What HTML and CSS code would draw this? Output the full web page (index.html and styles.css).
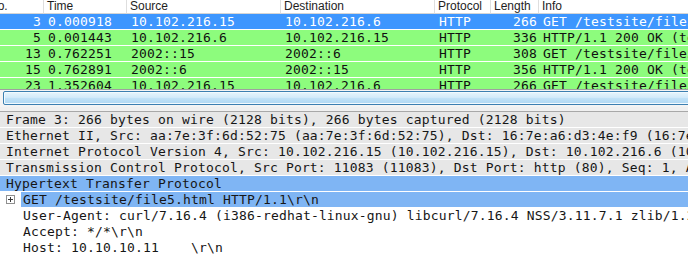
FILE: index.html
```html
<!DOCTYPE html>
<html>
<head>
<meta charset="utf-8">
<link rel="stylesheet" href="styles.css">
</head>
<body>
<div class="app">
  <div class="plist">
    <div class="grid">
      <div class="hd hd-no">No.</div>
      <div class="hd">Time</div>
      <div class="hd">Source</div>
      <div class="hd">Destination</div>
      <div class="hd">Protocol</div>
      <div class="hd">Length</div>
      <div class="hd">Info</div>

      <div class="row sel">
        <span class="c num">3</span><span class="c">0.000918</span><span class="c">10.102.216.15</span><span class="c">10.102.216.6</span><span class="c">HTTP</span><span class="c len">266</span><span class="c">GET /testsite/file5.html HTTP/1.1</span>
      </div>
      <div class="row">
        <span class="c num">5</span><span class="c">0.001443</span><span class="c">10.102.216.6</span><span class="c">10.102.216.15</span><span class="c">HTTP</span><span class="c len">336</span><span class="c">HTTP/1.1 200 OK  (text/html)</span>
      </div>
      <div class="row">
        <span class="c num">13</span><span class="c">0.762251</span><span class="c">2002::15</span><span class="c">2002::6</span><span class="c">HTTP</span><span class="c len">308</span><span class="c">GET /testsite/file5.html HTTP/1.1</span>
      </div>
      <div class="row">
        <span class="c num">15</span><span class="c">0.762891</span><span class="c">2002::6</span><span class="c">2002::15</span><span class="c">HTTP</span><span class="c len">356</span><span class="c">HTTP/1.1 200 OK  (text/html)</span>
      </div>
      <div class="row">
        <span class="c num">23</span><span class="c">1.352604</span><span class="c">10.102.216.15</span><span class="c">10.102.216.6</span><span class="c">HTTP</span><span class="c len">266</span><span class="c">GET /testsite/file5.html HTTP/1.1</span>
      </div>
    </div>
  </div>
  <div class="hscroll"><div class="thumb"></div></div>
  <div class="splitter"></div>
  <div class="details">
    <div class="dl g">Frame 3: 266 bytes on wire (2128 bits), 266 bytes captured (2128 bits)</div>
    <div class="dl g">Ethernet II, Src: aa:7e:3f:6d:52:75 (aa:7e:3f:6d:52:75), Dst: 16:7e:a6:d3:4e:f9 (16:7e:a6:d3:4e:f9)</div>
    <div class="dl g">Internet Protocol Version 4, Src: 10.102.216.15 (10.102.216.15), Dst: 10.102.216.6 (10.102.216.6)</div>
    <div class="dl g">Transmission Control Protocol, Src Port: 11083 (11083), Dst Port: http (80), Seq: 1, Ack: 1, Len: 200</div>
    <div class="dl hl">Hypertext Transfer Protocol</div>
    <div class="dl sub">
      <span class="box"><svg width="9" height="9" viewBox="0 0 9 9"><rect x="0.5" y="0.5" width="8" height="8" fill="#fff" stroke="#8f8f8f"/><path d="M2 4.5h5M4.5 2v5" stroke="#3a3a3a" stroke-width="1"/></svg></span>
      <span class="subtext hl2">GET /testsite/file5.html HTTP/1.1\r\n</span>
    </div>
    <div class="dl sub"><span class="subtext">User-Agent: curl/7.16.4 (i386-redhat-linux-gnu) libcurl/7.16.4 NSS/3.11.7.1 zlib/1.2.3\r\n</span></div>
    <div class="dl sub"><span class="subtext">Accept: */*\r\n</span></div>
    <div class="dl sub"><span class="subtext">Host: 10.10.10.11    \r\n</span></div>
  </div>
</div>
</body>
</html>
```

FILE: styles.css
```css
html, body {
  margin: 0;
  padding: 0;
  background: #ffffff;
}
.app {
  width: 688px;
  height: 256px;
  overflow: hidden;
  display: flex;
  flex-direction: column;
}
.plist {
  height: 89px;
  overflow: hidden;
  border-bottom: 1px solid #a0a0a0;
  flex: none;
}
.grid {
  display: grid;
  grid-template-columns: 57px 83px 154px 154px 56px 48px 300px;
  margin-left: -14px;
  width: 852px;
}
.hd {
  font-family: "Liberation Sans", Arial, sans-serif;
  font-size: 12px;
  line-height: 13px;
  height: 13px;
  color: #1e1e1e;
  padding-left: 3px;
  border-left: 1px solid #dedede;
  border-bottom: 1px solid #d5d5d5;
  background: #ffffff;
  white-space: nowrap;
  overflow: hidden;
}
.hd-no { border-left: none; }
.row {
  display: contents;
}
.c {
  font-family: "DejaVu Sans Mono", monospace;
  font-size: 13px;
  letter-spacing: 0.17px;
  line-height: 15px;
  height: 15px;
  padding-left: 5px;
  border-bottom: 1px solid #ffffff;
  background: #8dfc7d;
  color: #101010;
  white-space: nowrap;
  overflow: hidden;
}
.row.sel .c {
  background: #3d96fe;
  color: #ffffff;
}
.c.num, .c.len {
  text-align: right;
  padding-left: 0;
  padding-right: 2px;
}
.c.len { padding-right: 1px; }
.hscroll {
  height: 17px;
  flex: none;
  background: #f4f4f4;
  padding: 1px 0 2px 3px;
  box-sizing: border-box;
}
.thumb {
  height: 14px;
  width: 720px;
  box-sizing: border-box;
  border: 1px solid #3c7fb1;
  border-radius: 2px;
  background: linear-gradient(#e7f5fd 0%, #d3ebfa 45%, #bfe1f7 55%, #b0d8f3 100%);
  box-shadow: inset 0 0 0 1px #f2fafe;
}
.splitter {
  height: 4px;
  flex: none;
  background: #f0f0f0;
  border-bottom: 1px solid #a8a8a8;
}
.details {
  flex: 1;
  background: #ffffff;
  font-family: "DejaVu Sans Mono", monospace;
  font-size: 13px;
  letter-spacing: 0.17px;
  color: #161616;
}
.dl {
  height: 15px;
  line-height: 15px;
  border-bottom: 1px solid #ffffff;
  padding-left: 6px;
  white-space: nowrap;
  overflow: hidden;
}
.dl.g { background: #e7e7e7; }
.dl.hl { background: #7fb5f4; }
.dl.sub {
  display: flex;
  align-items: center;
  padding-left: 6px;
}
.box {
  width: 9px;
  height: 9px;
  flex: none;
  display: flex;
  margin-right: 6px;
}
.box svg { display: block; }
.subtext {
  padding-left: 2px;
  white-space: pre;
  flex: 1;
  line-height: 15px;
}
.dl.sub:not(:first-of-type) .subtext { }
.dl.sub .subtext:only-child { margin-left: 15px; }
.subtext.hl2 { background: #7fb5f4; }
```
